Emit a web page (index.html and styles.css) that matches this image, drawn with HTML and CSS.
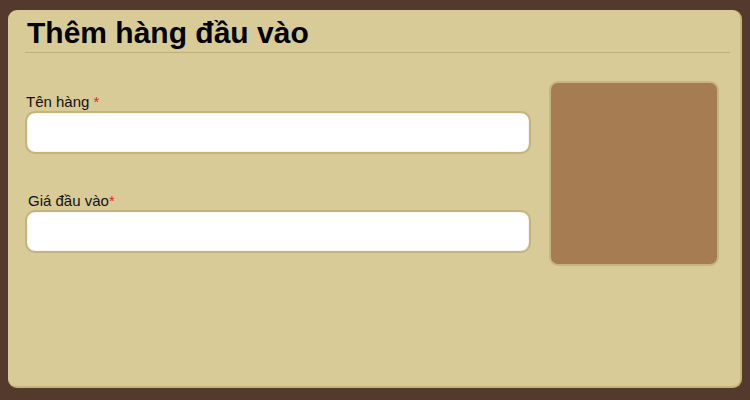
FILE: index.html
```html
<!DOCTYPE html>
<html lang="vi">
<head>
<meta charset="utf-8">
<link rel="stylesheet" href="styles.css">
</head>
<body>
<div class="panel">
  <h1 class="title">Thêm hàng đầu vào</h1>
  <div class="content">
    <div class="form">
      <div class="field">
        <label class="label">Tên hàng <span class="req">*</span></label>
        <input class="input" type="text">
      </div>
      <div class="field field-2">
        <label class="label label-2">Giá đầu vào<span class="req">*</span></label>
        <input class="input" type="text">
      </div>
    </div>
    <div class="photo"></div>
  </div>
</div>
</body>
</html>
```
FILE: styles.css
```css
html, body {
  margin: 0;
  padding: 0;
}
body {
  background: #543a2c;
  width: 750px;
  height: 400px;
  box-sizing: border-box;
  padding: 10px 8px 12px 8px;
  font-family: "Liberation Sans", Arial, sans-serif;
}
.panel {
  box-sizing: border-box;
  height: 378px;
  background: #d9cb98;
  border-radius: 9px;
  border-right: 2px solid #c4b47c;
  border-bottom: 2px solid #c4b47c;
  padding: 0 10px 0 17px;
}
.title {
  margin: 0;
  font-size: 30px;
  font-weight: bold;
  color: #000;
  line-height: 34px;
  padding: 6px 0 2px 2px;
  border-bottom: 1px solid #bdae7a;
}
.content {
  display: flex;
  align-items: flex-start;
  padding-top: 29px;
}
.form {
  width: 506px;
}
.field {
  display: flex;
  flex-direction: column;
  padding-top: 11px;
}
.field-2 {
  padding-top: 38px;
}
.label {
  font-size: 15px;
  line-height: 17px;
  color: #111;
  margin-bottom: 1px;
  padding-left: 1px;
}
.label-2 {
  padding-left: 3px;
}
.req {
  color: #e8261c;
}
.input {
  box-sizing: border-box;
  width: 506px;
  height: 43px;
  background: #fff;
  border: 2px solid #c3b37c;
  border-radius: 10px;
  box-shadow: inset 0 0 1px #b5a56e;
  outline: none;
  margin: 0;
}
.photo {
  box-sizing: border-box;
  margin-left: 18px;
  margin-top: -1px;
  width: 170px;
  height: 185px;
  background: #a67c52;
  border: 2px solid #c6b57e;
  border-radius: 9px;
}
```
